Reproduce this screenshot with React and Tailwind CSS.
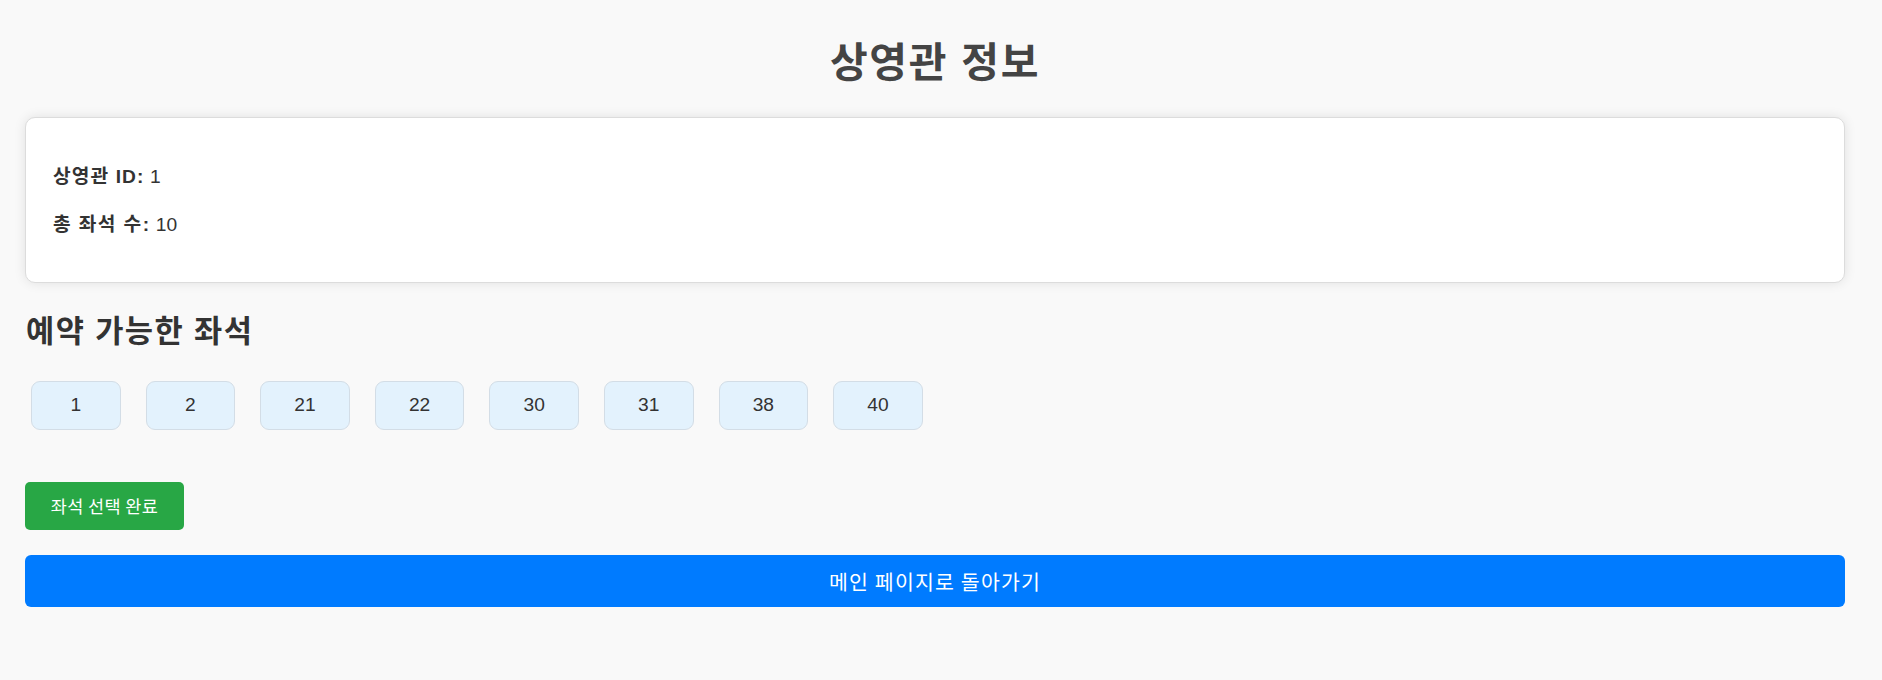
import React from "react";

const SEATS = [1, 2, 21, 22, 30, 31, 38, 40];

const App = () => {
  return (
    <div className="min-h-screen bg-[#f9f9f9] pl-[25px] pr-[37px] pt-[41px] pb-[60px] font-['Liberation_Sans','Noto_Sans_CJK_KR',sans-serif] text-[#333]">
      {/* Title */}
      <h1 className="text-center text-[41px] leading-[44px] font-bold text-[#444] tracking-[1.7px]">상영관 정보</h1>

      {/* Theater info card */}
      <div className="mt-[32px] h-[166px] bg-white border border-[#dcdcdc] rounded-[10px] shadow-[0_0_12px_rgba(0,0,0,0.1)] px-[27px] pt-[47px]">
        <p className="text-[19.2px] leading-[24px]">
          <span className="font-bold tracking-[1.1px]">상영관 ID:</span> 1
        </p>
        <p className="mt-[24px] text-[19.2px] leading-[24px]">
          <span className="font-bold tracking-[1.4px]">총 좌석 수:</span> 10
        </p>
      </div>

      {/* Available seats */}
      <h2 className="mt-[32px] text-[30.7px] leading-[34px] font-bold pl-[1px] tracking-[1.4px]">예약 가능한 좌석</h2>
      <div className="mt-[32px] flex gap-[25px] pl-[6px]">
        {SEATS.map((s) => (
          <button
            key={s}
            className="w-[89.6px] h-[49px] flex items-center justify-center bg-[#e3f2fd] border border-[#d3dde6] rounded-[9px] text-[19.2px] text-[#333]"
          >
            {s}
          </button>
        ))}
      </div>

      <button className="mt-[52px] w-[159px] h-[48px] flex items-center justify-center bg-[#28a745] text-white rounded-[5px] text-[17.5px] tracking-[0.4px] font-['Noto_Sans_CJK_KR',sans-serif]">
        좌석 선택 완료
      </button>

      <button className="mt-[25px] w-full h-[52px] flex items-center justify-center bg-[#007bff] text-white rounded-[6px] text-[20.5px] tracking-[1.2px] font-['Noto_Sans_CJK_KR',sans-serif]">
        메인 페이지로 돌아가기
      </button>
    </div>
  );
};

export default App;
